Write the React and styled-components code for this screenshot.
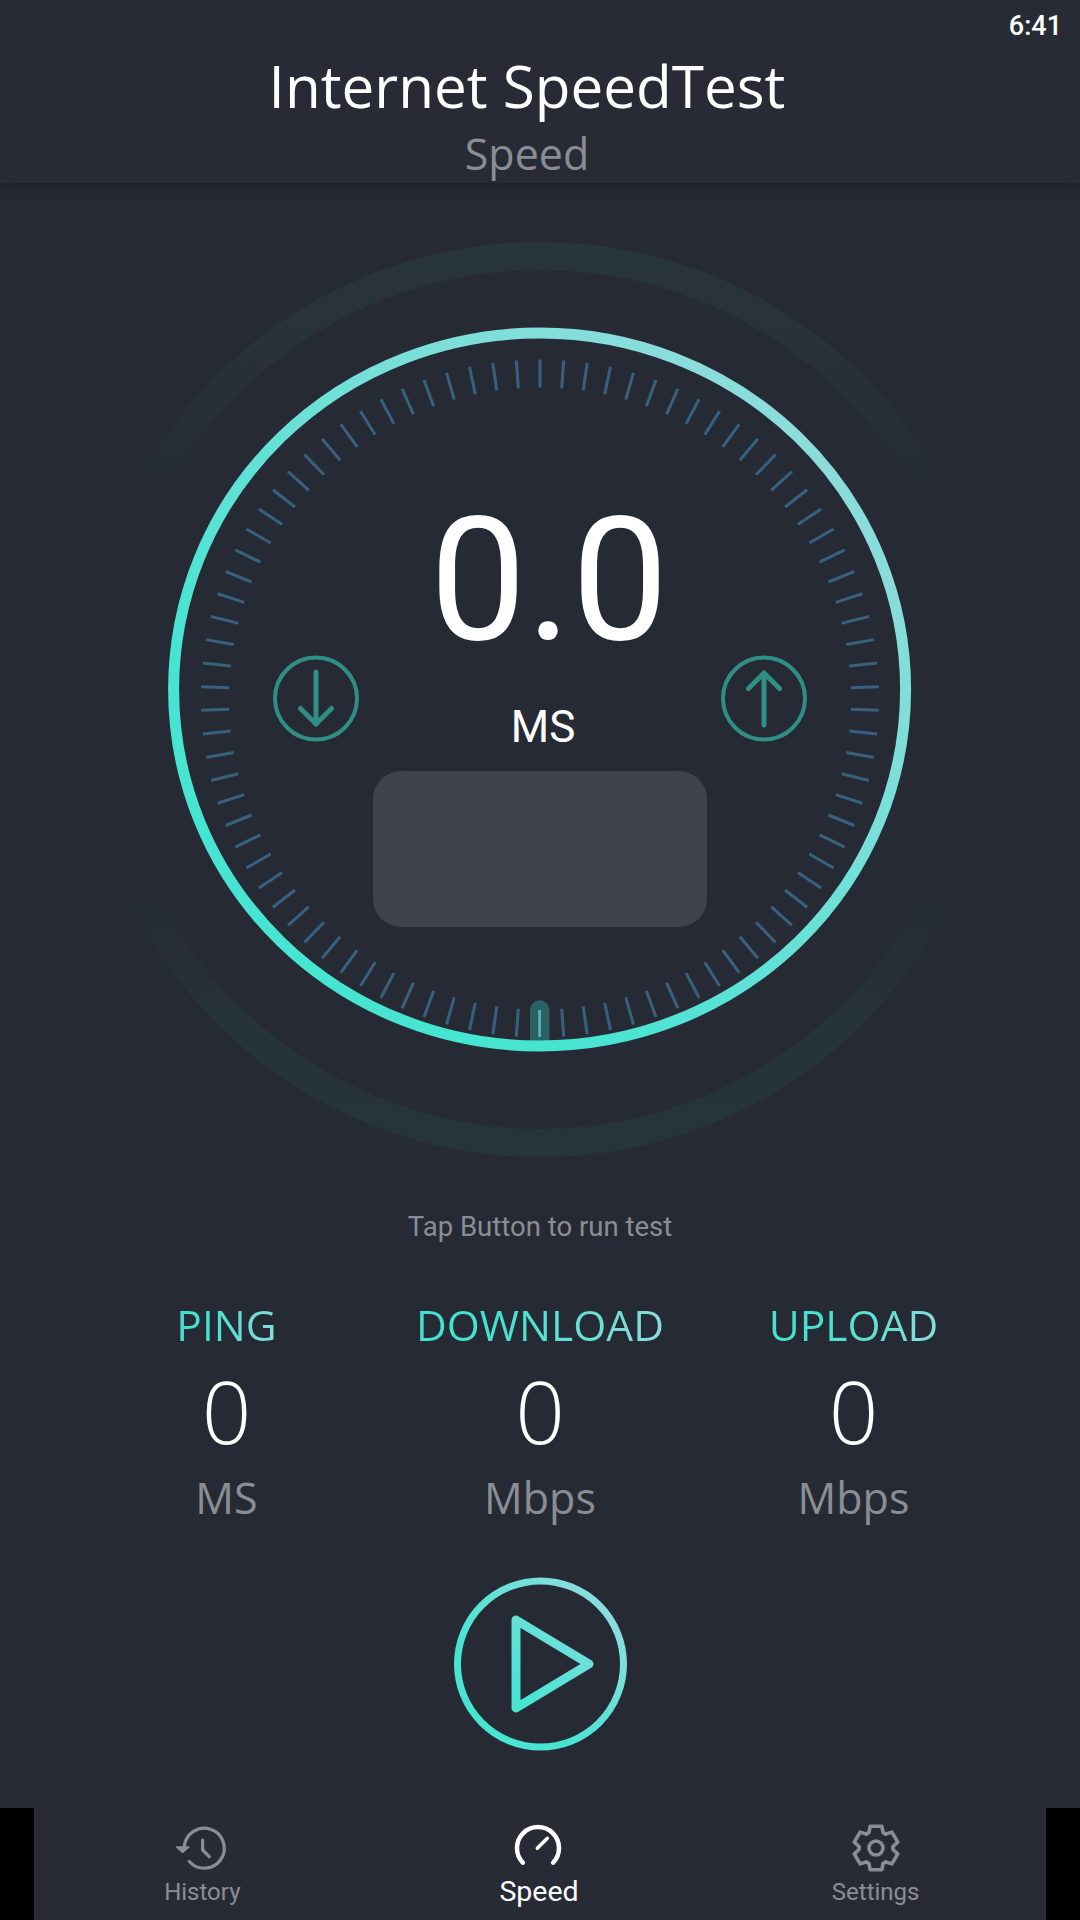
import React from 'react';
import styled, { createGlobalStyle } from 'styled-components';

const GlobalStyle = createGlobalStyle`
  html, body {
    margin: 0;
    padding: 0;
    background: #262a34;
  }
  * { box-sizing: border-box; }
`;

const Page = styled.div`
  width: 1080px;
  height: 1920px;
  display: flex;
  flex-direction: column;
  overflow: hidden;
  position: relative;
  background: #262a34;
  font-family: "Open Sans", sans-serif;
`;

const Header = styled.header`
  height: 183px;
  padding: 51px 26px 0 0;
  background: #282b36;
  box-shadow: 0 3px 12px rgba(25, 27, 35, 0.7);
  text-align: center;
  position: relative;
  z-index: 1;
`;

const Clock = styled.span`
  position: absolute;
  top: 10px;
  right: 18px;
  font: 500 27px/32px Roboto, sans-serif;
  color: #fff;
`;

const Title = styled.h1`
  margin: 0;
  font-size: 58.4px;
  font-weight: 400;
  line-height: 70px;
  color: #fff;
`;

const SubTitle = styled.div`
  margin-top: 8px;
  font-size: 43px;
  line-height: 50px;
  color: #8b8d96;
`;

const Dial = styled.section`
  position: relative;
  height: 1020px;
  padding-top: 311px;
  display: flex;
  flex-direction: column;
  align-items: center;
`;

const DialArt = styled.svg`
  position: absolute;
  left: 0;
  top: 0;
`;

const Reading = styled.div`
  position: relative;
  margin-left: 18px;
  font: 400 172px/172px Roboto, sans-serif;
  color: #fff;
`;

const ReadingUnit = styled.div`
  position: relative;
  margin: 36px 0 0 6px;
  font: 400 44px/50px Roboto, sans-serif;
  color: #fff;
`;

const ServerCard = styled.div`
  position: relative;
  width: 334px;
  height: 156px;
  margin-top: 19px;
  border-radius: 28px;
  background: #40434e;
`;

const Hint = styled.div`
  height: 48px;
  font: 400 27.5px/48px Roboto, sans-serif;
  color: #8b8d96;
  text-align: center;
`;

const Stats = styled.section`
  display: grid;
  grid-template-columns: repeat(3, 313.5px);
  justify-content: center;
  margin-top: 44px;
`;

const Stat = styled.div`
  display: flex;
  flex-direction: column;
  align-items: center;
`;

const StatLabel = styled.div`
  font-size: 42.5px;
  line-height: 60px;
  background: linear-gradient(100deg, #45e2cf 0%, #45e2cf 35%, #8cdcda 100%);
  -webkit-background-clip: text;
  background-clip: text;
  color: transparent;
`;

const StatValue = styled.div`
  margin-top: 5px;
  font-size: 87px;
  font-weight: 300;
  line-height: 100px;
  color: #fff;
`;

const StatUnit = styled.div`
  margin-top: 8px;
  font-size: 43px;
  line-height: 60px;
  color: #8b8d96;
`;

const PlayButton = styled.button`
  display: block;
  width: 180px;
  height: 180px;
  margin: 46px auto 0;
  padding: 0;
  border: none;
  background: none;
`;

const BottomBar = styled.div`
  margin-top: auto;
  height: 112px;
  padding: 0 34px;
  background: #000;
`;

const Tabs = styled.nav`
  height: 100%;
  padding-right: 2px;
  display: grid;
  grid-template-columns: repeat(3, 1fr);
  background: #282b36;
`;

const Tab = styled.div`
  display: flex;
  flex-direction: column;
  align-items: center;
  padding-top: 10px;
  color: ${props => (props.$active ? '#fff' : '#8b8d96')};
`;

const TabIcon = styled.svg`
  display: block;
  width: 60px;
  height: 60px;
  fill: none;
  stroke: currentColor;
  stroke-linecap: round;
  stroke-linejoin: round;
`;

const TabLabel = styled.span`
  margin-top: -1px;
  font: 400 ${props => (props.$active ? '28.5px' : '24px')}/30px Roboto, sans-serif;
`;

const ticks = Array.from({ length: 90 }, (_, i) => i * 4);

// six tooth gear outline, centred on 30,30
const gearPath = () => {
  const pts = [];
  for (let k = 0; k < 6; k++) {
    const a = -90 + k * 60;
    [[-25, 17], [-15, 22.5], [15, 22.5], [25, 17]].forEach(([d, r]) => {
      const rad = ((a + d) * Math.PI) / 180;
      pts.push(`${(30 + r * Math.cos(rad)).toFixed(2)} ${(30 + r * Math.sin(rad)).toFixed(2)}`);
    });
  }
  return `M${pts.join('L')}Z`;
};

function DialDrawing() {
  return (
    <DialArt width="1080" height="1020" viewBox="0 0 1080 1020">
      <defs>
        <linearGradient id="ringGrad" x1="0.12" y1="0.88" x2="0.9" y2="0.1">
          <stop offset="0.2" stopColor="#47e4d2" />
          <stop offset="0.65" stopColor="#78dfd9" />
          <stop offset="1" stopColor="#8fdcdc" />
        </linearGradient>
        <linearGradient id="haloGrad" gradientUnits="userSpaceOnUse" x1="0" y1="59" x2="0" y2="974">
          <stop offset="0" stopColor="#28353b" />
          <stop offset="0.1" stopColor="#283239" />
          <stop offset="0.3" stopColor="#262a34" />
          <stop offset="0.7" stopColor="#262a34" />
          <stop offset="0.86" stopColor="#263339" />
          <stop offset="1" stopColor="#26353a" />
        </linearGradient>
      </defs>

      <circle cx="540" cy="516.5" r="443.5" fill="none" stroke="url(#haloGrad)" strokeWidth="28" />

      {ticks.map(deg => (
        <line
          key={deg}
          x1="540"
          y1={515.5 + 311}
          x2="540"
          y2={515.5 + 339}
          stroke="#38607f"
          strokeWidth="3"
          transform={`rotate(${deg} 540 515.5)`}
        />
      ))}

      <path d="M530 859V827a9.7 9.7 0 0 1 19.4 0V859Z" fill="#2a6163" />
      <line x1="539.6" y1="827" x2="539.6" y2="854" stroke="#5fb4b5" strokeWidth="2.6" />

      <ellipse cx="539.6" cy="506.5" rx="366" ry="356.5" fill="none" stroke="url(#ringGrad)" strokeWidth="11" />

      <g fill="none" stroke="#2f8f85" strokeWidth="4" strokeLinecap="round" strokeLinejoin="round">
        <circle cx="316" cy="515.5" r="41" />
        <path d="M316 489V541M300.500 525.500L316 541L331.500 525.500" strokeWidth="5" />
        <circle cx="764" cy="515.5" r="41" />
        <path d="M764 542V490M748.500 505.500L764 490L779.500 505.500" strokeWidth="5" />
      </g>
    </DialArt>
  );
}

function App() {
  return (
    <Page>
      <GlobalStyle />
      <Header>
        <Clock>6:41</Clock>
        <Title>Internet SpeedTest</Title>
        <SubTitle>Speed</SubTitle>
      </Header>

      <Dial>
        <DialDrawing />
        <Reading>0.0</Reading>
        <ReadingUnit>MS</ReadingUnit>
        <ServerCard />
      </Dial>

      <Hint>Tap Button to run test</Hint>

      <Stats>
        <Stat>
          <StatLabel>PING</StatLabel>
          <StatValue>0</StatValue>
          <StatUnit>MS</StatUnit>
        </Stat>
        <Stat>
          <StatLabel>DOWNLOAD</StatLabel>
          <StatValue>0</StatValue>
          <StatUnit>Mbps</StatUnit>
        </Stat>
        <Stat>
          <StatLabel>UPLOAD</StatLabel>
          <StatValue>0</StatValue>
          <StatUnit>Mbps</StatUnit>
        </Stat>
      </Stats>

      <PlayButton aria-label="Run test">
        <svg width="180" height="180" viewBox="0 0 180 180" fill="none">
          <defs>
            <linearGradient id="playGrad" gradientUnits="userSpaceOnUse" x1="20" y1="160" x2="165" y2="20">
              <stop offset="0.3" stopColor="#47e4d2" />
              <stop offset="1" stopColor="#92dde0" />
            </linearGradient>
          </defs>
          <circle cx="90.500" cy="90" r="83" stroke="url(#playGrad)" strokeWidth="7" />
          <path d="M66 46L139 90L66 134Z" stroke="url(#playGrad)" strokeWidth="9" strokeLinejoin="round" />
        </svg>
      </PlayButton>

      <BottomBar>
        <Tabs>
          <Tab>
            <TabIcon viewBox="0 0 60 60" strokeWidth="3.200">
              <path d="M12.300 29A20 20 0 1 1 17.300 43.500" />
              <path d="M4.500 29H17L10.700 34.500Z" fill="currentColor" strokeWidth="1.500" />
              <path d="M30.600 22V32L37.300 38.700" />
            </TabIcon>
            <TabLabel>History</TabLabel>
          </Tab>
          <Tab $active>
            <TabIcon viewBox="0 0 60 60" strokeWidth="4.500">
              <path d="M13.900 44.700A21 21 0 1 1 44.100 44.700" />
              <path d="M28.300 30.300L38.300 20.300" strokeWidth="3.500" />
            </TabIcon>
            <TabLabel $active>Speed</TabLabel>
          </Tab>
          <Tab>
            <TabIcon viewBox="0 0 60 60" strokeWidth="3.600">
              <path d={gearPath()} />
              <circle cx="30" cy="30" r="7" />
            </TabIcon>
            <TabLabel>Settings</TabLabel>
          </Tab>
        </Tabs>
      </BottomBar>
    </Page>
  );
}

export default App;
